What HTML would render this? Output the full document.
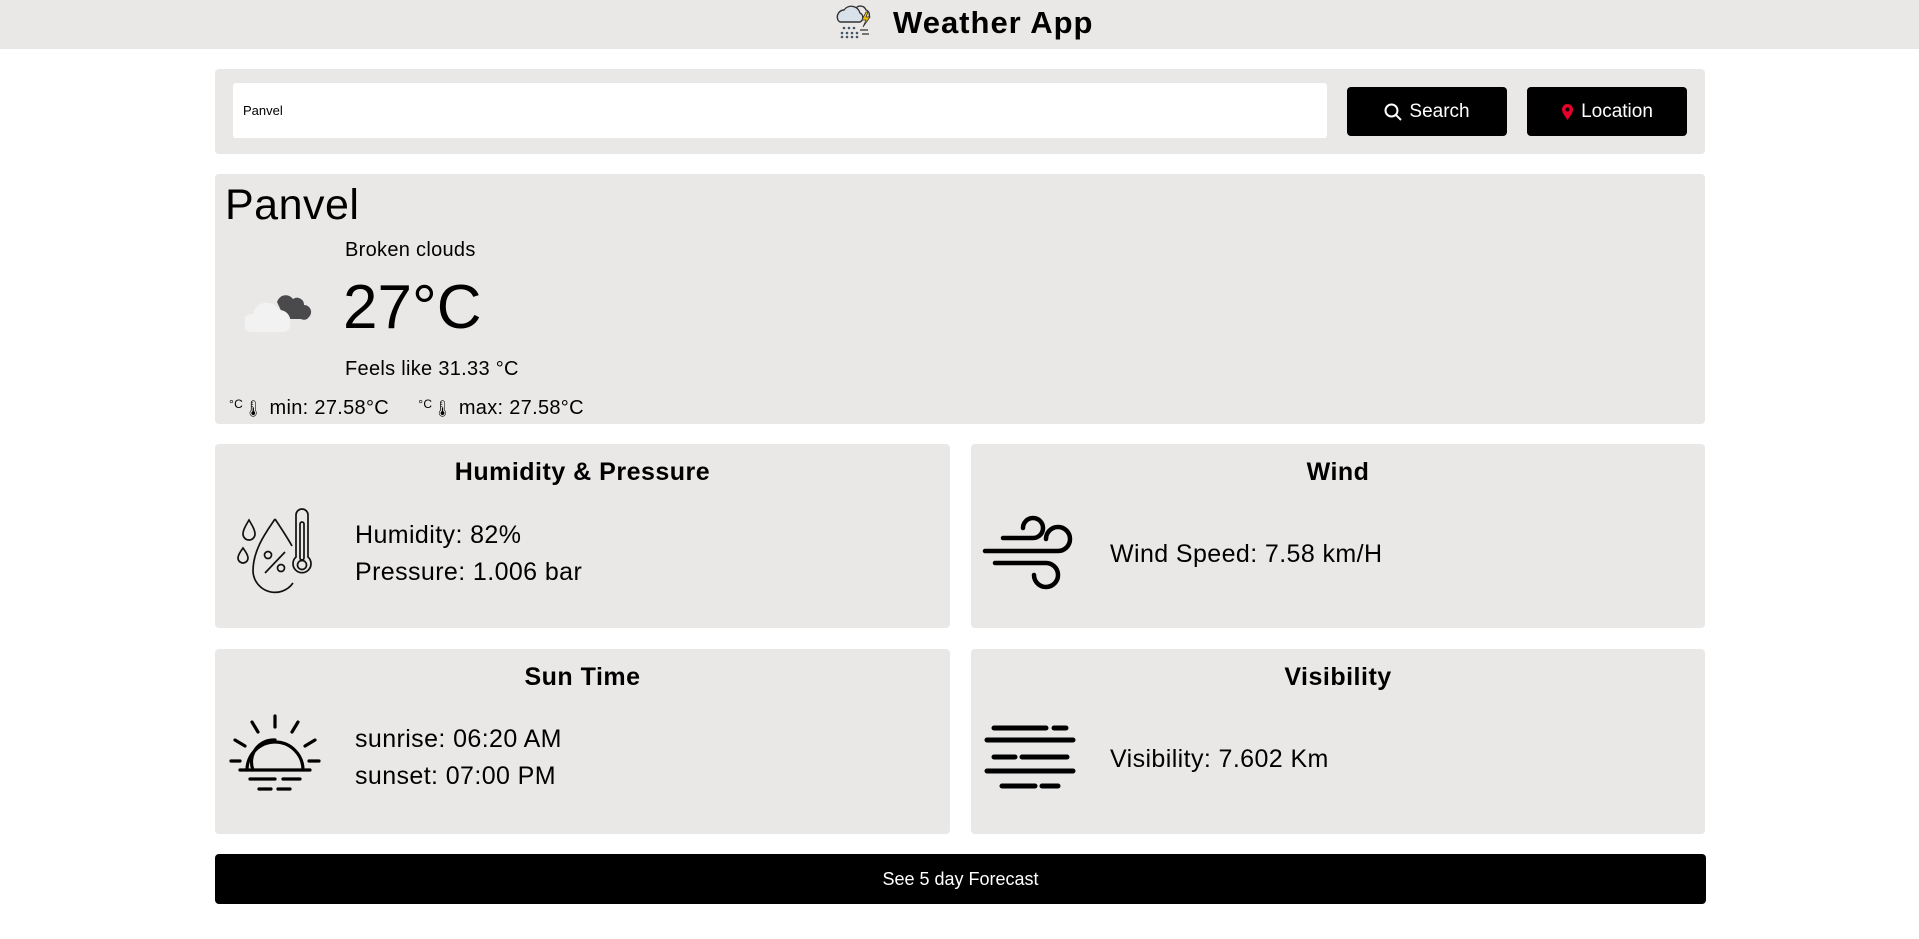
<!DOCTYPE html>
<html><head><meta charset="utf-8"><style>
*{margin:0;padding:0;box-sizing:border-box}
body{width:1919px;height:939px;background:#fff;font-family:"Liberation Sans",sans-serif;color:#000;position:relative;overflow:hidden}
.a{position:absolute}
.bg{background:#eae8e7;border-radius:4px}
.btn{background:#000;color:#fff;border-radius:4px;font-size:19px;display:flex;align-items:center;justify-content:center;gap:7px}
.t{font-weight:bold;font-size:25px;text-align:center;width:100%;top:14px;letter-spacing:0.5px}
.tx{font-size:25px;line-height:37px;letter-spacing:0.4px}
</style></head><body>
<div class="a" style="left:0;top:0;width:1919px;height:49px;background:#eae8e7"></div>
<svg class="a" style="left:832px;top:0" width="44" height="40" viewBox="0 0 44 40">
<path d="M6 20a7 7 0 0 1 6-10a9 9 0 0 1 16 3a5 5 0 0 1 0 9H8a4 4 0 0 1-2-2z" fill="#d9e2ea" stroke="#333" stroke-width="1.4"/>
<path d="M24 8a6 6 0 0 1 10 2a5 5 0 0 1 1 9" fill="none" stroke="#333" stroke-width="1.4"/>
<path d="M34 12l-4 8h4l-3 7 7-10h-4l2-5z" fill="#f2c200" stroke="#333" stroke-width=".8"/>
<g fill="#456" ><circle cx="12" cy="28" r="1.3"/><circle cx="17" cy="28" r="1.3"/><circle cx="22" cy="28" r="1.3"/><circle cx="10" cy="33" r="1.3"/><circle cx="15" cy="33" r="1.3"/><circle cx="20" cy="33" r="1.3"/><circle cx="25" cy="33" r="1.3"/><circle cx="10" cy="37" r="1.3"/><circle cx="15" cy="37" r="1.3"/><circle cx="20" cy="37" r="1.3"/><circle cx="25" cy="37" r="1.3"/></g>
<path d="M28 30h8M30 34h7" stroke="#333" stroke-width="1.2"/>
</svg>
<div class="a" style="left:893px;top:5px;font-size:31px;font-weight:bold;letter-spacing:1px">Weather App</div>

<div class="a bg" style="left:215px;top:69px;width:1490px;height:85px"></div>
<div class="a" style="left:233px;top:83px;width:1094px;height:55px;background:#fff;border-radius:3px;font-size:13px;padding:20px 10px">Panvel</div>
<div class="a btn" style="left:1347px;top:87px;width:160px;height:49px"><svg width="18" height="18" viewBox="0 0 18 18"><circle cx="7.5" cy="7.5" r="6" fill="none" stroke="#fff" stroke-width="2"/><path d="M12 12l5 5" stroke="#fff" stroke-width="2"/></svg>Search</div>
<div class="a btn" style="left:1527px;top:87px;width:160px;height:49px"><svg width="13" height="18" viewBox="0 0 13 18"><path d="M6.5 17C3 12 1 9 1 6.5a5.5 5.5 0 0 1 11 0C12 9 10 12 6.5 17z" fill="#e8002d"/><circle cx="6.5" cy="6.5" r="2" fill="#000"/></svg>Location</div>

<div class="a bg" style="left:215px;top:174px;width:1490px;height:250px"></div>
<div class="a" style="left:225px;top:181px;font-size:43px;letter-spacing:0.5px">Panvel</div>
<div class="a" style="left:345px;top:239px;font-size:20px;letter-spacing:0.3px">Broken clouds</div>
<svg class="a" style="left:245px;top:284px" width="72" height="50" viewBox="0 0 72 50">
<path d="M32 18a9 9 0 0 1 16-3a7 7 0 0 1 11 6a7 7 0 0 1 5 12a6 6 0 0 1-8 2H40z" fill="#4a4a4c"/>
<path d="M6 48a9 9 0 0 1 2-18a14 14 0 0 1 26-4a11 11 0 0 1 11 14a7 7 0 0 1-6 8z" fill="#f2f2f2"/>
</svg>
<div class="a" style="left:343px;top:272px;font-size:62px">27°C</div>
<div class="a" style="left:345px;top:358px;font-size:20px;letter-spacing:0.3px">Feels like 31.33 °C</div>
<div class="a" style="left:229px;top:397px;font-size:20px;letter-spacing:0.3px">
<span style="font-size:12px;vertical-align:6px">°C</span><span style="font-size:16px">🌡</span> min: 27.58°C &nbsp;&nbsp;&nbsp; <span style="font-size:12px;vertical-align:6px">°C</span><span style="font-size:16px">🌡</span> max: 27.58°C</div>

<div class="a bg" style="left:215px;top:444px;width:735px;height:184px">
<div class="a t">Humidity &amp; Pressure</div>
<svg class="a" style="left:10px;top:51px" width="110" height="110" viewBox="0 0 110 110" fill="none" stroke="#111" stroke-width="1.7">
<path d="M50 24C42 36 28 54 28 76a22 22 0 0 0 40 12"/>
<path d="M50 24C56 33 62 42 67 51"/>
<path d="M24 25c-3 5-6 10-6 14a6 6 0 0 0 12 0c0-4-3-9-6-14z"/>
<path d="M18 53c-3 4-5 7-5 10a5 5 0 0 0 10 0c0-3-2-6-5-10z"/>
<circle cx="43" cy="60" r="3.5"/><circle cx="56" cy="73" r="3.5"/><path d="M40 78l20-21"/>
<path d="M71 62V20a6 6 0 0 1 12 0v42a9 9 0 1 1-12 0z"/>
<rect x="75" y="27" width="4" height="38" rx="2"/><circle cx="77" cy="70" r="4.5"/>
</svg>
<div class="a tx" style="left:140px;top:73px">Humidity: 82%<br>Pressure: 1.006 bar</div>
</div>
<div class="a bg" style="left:971px;top:444px;width:734px;height:184px">
<div class="a t">Wind</div>
<svg class="a" style="left:4px;top:56px" width="110" height="110" viewBox="0 0 110 110" fill="none" stroke="#000" stroke-width="4.5" stroke-linecap="round">
<path d="M28 38H58a10 10 0 1 0-10-10"/>
<path d="M10 51H83a12 12 0 1 0-12-12"/>
<path d="M20 63H70a12 12 0 1 1-11 12"/>
</svg>
<div class="a tx" style="left:139px;top:92px">Wind Speed: 7.58 km/H</div>
</div>
<div class="a bg" style="left:215px;top:649px;width:735px;height:185px">
<div class="a t">Sun Time</div>
<svg class="a" style="left:10px;top:51px" width="110" height="110" viewBox="0 0 110 110" fill="none" stroke="#000" stroke-width="3.2" stroke-linecap="round">
<path d="M22 70a28 28 0 0 1 56 0"/><path d="M28 70a22 22 0 0 1 22-30"/>
<path d="M15 70H85M25 79H50M58 79H75M34 89H46M53 89H65"/>
<path d="M50 16V27M27 22l6 10M73 22l-6 10M10 40l10 6M90 40l-10 6M6 61h9M84 61h10"/>
</svg>
<div class="a tx" style="left:140px;top:72px">sunrise: 06:20 AM<br>sunset: 07:00 PM</div>
</div>
<div class="a bg" style="left:971px;top:649px;width:734px;height:185px">
<div class="a t">Visibility</div>
<svg class="a" style="left:4px;top:56px" width="110" height="110" viewBox="0 0 110 110" fill="none" stroke="#000" stroke-width="5" stroke-linecap="round">
<path d="M19 23H71M79 23H91M12 35H98M19 52H40M47 52H92M12 66H98M27 81H60M67 81H83"/>
</svg>
<div class="a tx" style="left:139px;top:92px">Visibility: 7.602 Km</div>
</div>
<div class="a btn" style="left:215px;top:854px;width:1491px;height:50px;font-size:18px">See 5 day Forecast</div>
</body></html>
